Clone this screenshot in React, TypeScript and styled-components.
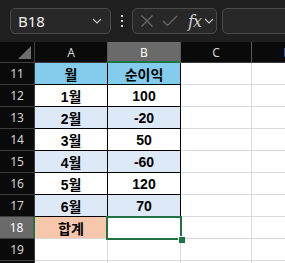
import React from 'react';
import styled, { createGlobalStyle } from 'styled-components';

const GlobalStyle = createGlobalStyle`
  html, body {
    margin: 0;
    padding: 0;
    background: #0a0a0a;
  }
`;

const Window = styled.div`
  width: 285px;
  height: 263px;
  overflow: hidden;
  background: #1f1f1f;
  font-family: 'Noto Sans', 'Noto Sans CJK KR', sans-serif;
`;

const Toolbar = styled.div`
  height: 42px;
  display: flex;
  align-items: center;
  padding-left: 10px;
  box-sizing: border-box;
  overflow: hidden;
`;

const Box = styled.div<{ $width: number }>`
  width: ${(p) => p.$width}px;
  height: 26px;
  box-sizing: border-box;
  border: 1px solid #4a4a4a;
  border-radius: 5px;
  background: #282828;
  display: flex;
  align-items: center;
  flex-shrink: 0;
`;

const NameText = styled.span`
  flex: 1;
  padding-left: 7px;
  color: #f0f0f0;
  font-size: 15px;
`;

const Dots = styled.div`
  width: 21px;
  flex-shrink: 0;
  display: flex;
  flex-direction: column;
  align-items: center;
  gap: 3px;
  span {
    width: 2px;
    height: 2px;
    background: #d0d0d0;
  }
`;

const Gap = styled.div`
  width: 5px;
  flex-shrink: 0;
`;

const Fx = styled.span`
  font-family: 'DejaVu Serif', 'Liberation Serif', serif;
  font-style: italic;
  font-size: 16px;
  color: #cfcfcf;
  margin-left: 10px;
  letter-spacing: -1px;
`;

const Grid = styled.div`
  display: grid;
  grid-template-columns: 35px 73px 73px 71px 73px;
  grid-template-rows: 21px repeat(10, 22px);
`;

const Corner = styled.div`
  background: #0a0a0a;
  border-right: 1px solid #3c3c3c;
  border-bottom: 1px solid #3c3c3c;
  position: relative;
  &::after {
    content: '';
    position: absolute;
    right: 3px;
    bottom: 3px;
    border-style: solid;
    border-width: 0 0 13px 13px;
    border-color: transparent transparent #6e6e6e transparent;
  }
`;

const ColHead = styled.div<{ $active?: boolean }>`
  background: ${(p) => (p.$active ? '#6a6a6a' : '#0a0a0a')};
  color: ${(p) => (p.$active ? '#ffffff' : '#d4d4d4')};
  border-right: 1px solid #5a5a5a;
  border-bottom: ${(p) => (p.$active ? '2px solid #217346' : '1px solid #3c3c3c')};
  display: flex;
  align-items: center;
  justify-content: center;
  font-size: 12px;
  padding-top: ${(p) => (p.$active ? '1px' : '0')};
`;

const RowHead = styled.div<{ $active?: boolean }>`
  background: ${(p) => (p.$active ? '#6a6a6a' : '#0a0a0a')};
  color: ${(p) => (p.$active ? '#ffffff' : '#d4d4d4')};
  border-right: ${(p) => (p.$active ? '2px solid #217346' : '1px solid #3c3c3c')};
  border-bottom: 1px solid #3c3c3c;
  display: flex;
  align-items: center;
  justify-content: center;
  font-size: 12px;
`;

const Cell = styled.div<{ $bg?: string; $line?: string }>`
  position: relative;
  background: ${(p) => p.$bg || '#ffffff'};
  border-right: 1px solid ${(p) => p.$line || '#dadada'};
  border-bottom: 1px solid ${(p) => p.$line || '#dadada'};
  display: flex;
  align-items: center;
  justify-content: center;
  font-family: 'Liberation Sans', 'Noto Sans CJK KR', sans-serif;
  font-weight: bold;
  font-size: 14px;
  color: #000;
`;

const Selection = styled.div`
  position: absolute;
  z-index: 2;
  left: -2px;
  top: -1px;
  right: -2px;
  bottom: -2px;
  border: 2px solid #217346;
  box-sizing: border-box;
  &::after {
    content: '';
    position: absolute;
    right: -5px;
    bottom: -5px;
    width: 6px;
    height: 6px;
    background: #217346;
    border-style: solid;
    border-color: #ffffff;
    border-width: 1px 0 0 1px;
  }
`;

const Chevron = ({ color }: { color: string }) => (
  <svg width="10" height="6" viewBox="0 0 10 6">
    <path d="M1 1l4 4 4-4" fill="none" stroke={color} strokeWidth="1.1" />
  </svg>
);

const BLUE = '#83cceb';
const LIGHT = '#dde9f6';
const PEACH = '#f7c7ac';

const rows = [
  { n: 11, a: '월', b: '순이익', bg: BLUE },
  { n: 12, a: '1월', b: '100', bg: '#ffffff' },
  { n: 13, a: '2월', b: '-20', bg: LIGHT },
  { n: 14, a: '3월', b: '50', bg: '#ffffff' },
  { n: 15, a: '4월', b: '-60', bg: LIGHT },
  { n: 16, a: '5월', b: '120', bg: '#ffffff' },
  { n: 17, a: '6월', b: '70', bg: LIGHT },
];

export default function App() {
  return (
    <Window>
      <GlobalStyle />
      <Toolbar>
        <Box $width={101}>
          <NameText>B18</NameText>
          <span style={{ marginRight: 8, display: 'flex' }}>
            <Chevron color="#c8c8c8" />
          </span>
        </Box>
        <Dots>
          <span />
          <span />
          <span />
        </Dots>
        <Box $width={85}>
          <svg width="14" height="14" viewBox="0 0 14 14" style={{ marginLeft: 7 }}>
            <path d="M1.5 1.5l11 11M12.5 1.5l-11 11" stroke="#6a6a6a" strokeWidth="1.2" />
          </svg>
          <svg width="16" height="12" viewBox="0 0 16 12" style={{ marginLeft: 8 }}>
            <path d="M1 6l4.5 4.5L15 1" fill="none" stroke="#6a6a6a" strokeWidth="1.2" />
          </svg>
          <Fx>fx</Fx>
          <span style={{ marginLeft: 3, display: 'flex' }}>
            <Chevron color="#c8c8c8" />
          </span>
        </Box>
        <Gap />
        <Box $width={80} />
      </Toolbar>
      <Grid>
        <Corner />
        <ColHead>A</ColHead>
        <ColHead $active>B</ColHead>
        <ColHead>C</ColHead>
        <ColHead>D</ColHead>
        {rows.map((r) => (
          <React.Fragment key={r.n}>
            <RowHead>{r.n}</RowHead>
            <Cell $bg={r.bg} $line="#000">{r.a}</Cell>
            <Cell $bg={r.bg} $line="#000">{r.b}</Cell>
            <Cell />
            <Cell />
          </React.Fragment>
        ))}
        <RowHead $active>18</RowHead>
        <Cell $bg={PEACH}>합계</Cell>
        <Cell>
          <Selection />
        </Cell>
        <Cell />
        <Cell />
        <RowHead>19</RowHead>
        <Cell />
        <Cell />
        <Cell />
        <Cell />
        <RowHead />
        <Cell />
        <Cell />
        <Cell />
        <Cell />
      </Grid>
    </Window>
  );
}
